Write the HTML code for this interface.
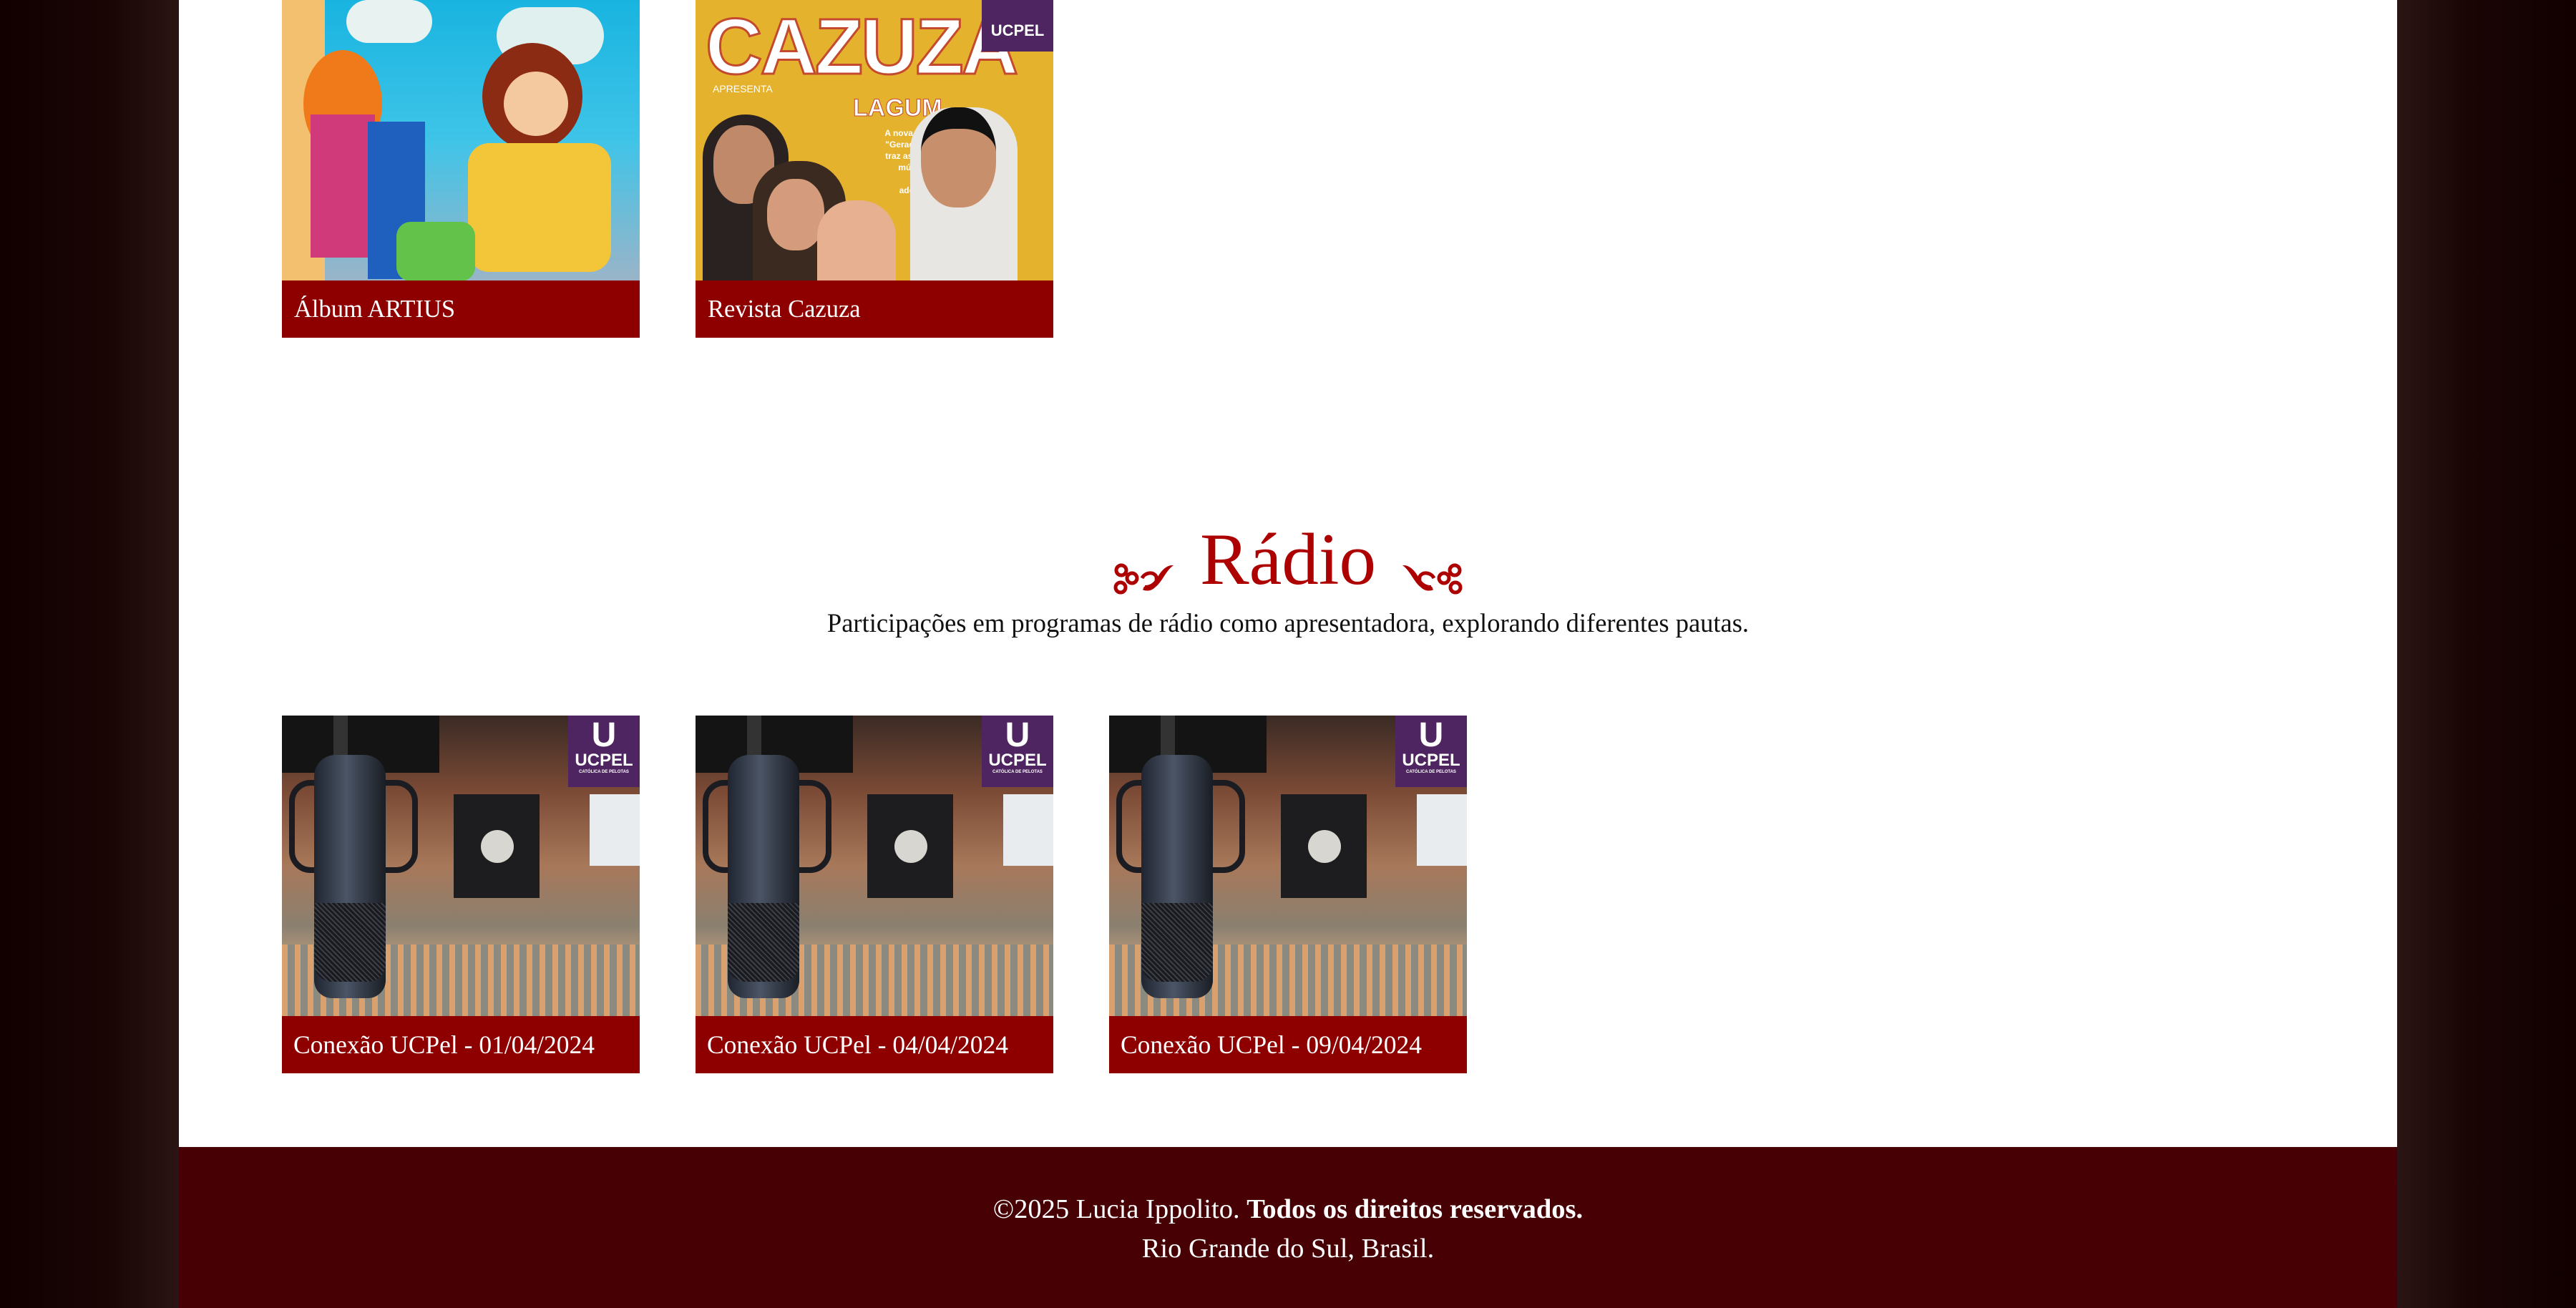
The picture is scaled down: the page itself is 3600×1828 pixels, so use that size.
<!DOCTYPE html>
<html><head><meta charset="utf-8"><style>
*{margin:0;padding:0;box-sizing:border-box}
html,body{width:3600px;height:1828px;overflow:hidden}
body{background:linear-gradient(90deg,#120000 0,#140101 100px,#2a1414 250px,#2a1414 3350px,#1a0505 3450px,#120000 3600px);position:relative;font-family:"Liberation Serif",serif}
#main{position:absolute;left:250px;top:0;width:3100px;height:1603px;background:#fff}
#foot{position:absolute;left:250px;top:1603px;width:3100px;height:225px;background:#470003;color:#fff;text-align:center;font-size:38.5px}
.card{position:absolute;width:500px;overflow:hidden}
.lab{position:absolute;left:0;width:500px;height:80px;background:#8e0000;color:#fff;font-size:34.5px;padding-left:17px;line-height:80px}
.img{position:absolute;left:0;top:0;width:500px;overflow:hidden}
.ucp{position:absolute;right:0;top:0;width:100px;height:100px;background:#4e2560;color:#fff;font-family:"Liberation Sans",sans-serif;font-weight:bold;text-align:center}
</style></head><body>
<div style="position:absolute;left:0;top:0;width:250px;height:1828px;background:linear-gradient(90deg,#110000,#1a0505 60%,#2a1414)"></div>
<div style="position:absolute;left:3350px;top:0;width:250px;height:1828px;background:linear-gradient(90deg,#2a1414,#1a0505 40%,#110000)"></div>
<div id="main"></div>

<!-- Album ARTIUS -->
<div class="card" style="left:394px;top:0;height:472px">
 <div class="img" style="height:393px;background:linear-gradient(180deg,#18b4e0,#3fc4e8 50%,#9ab4c8)">
  <div style="position:absolute;left:0;top:0;width:60px;height:393px;background:#f3c070"></div>
  <div style="position:absolute;left:90px;top:0;width:120px;height:60px;background:#e8f2f0;border-radius:40px"></div>
  <div style="position:absolute;left:300px;top:10px;width:150px;height:80px;background:#dff0ee;border-radius:40px"></div>
  <div style="position:absolute;left:30px;top:70px;width:110px;height:150px;background:#f07a1a;border-radius:50%"></div>
  <div style="position:absolute;left:40px;top:160px;width:90px;height:200px;background:#d13a7a"></div>
  <div style="position:absolute;left:120px;top:170px;width:80px;height:220px;background:#1f5fbd"></div>
  <div style="position:absolute;left:280px;top:60px;width:140px;height:150px;background:#8c2b14;border-radius:50%"></div>
  <div style="position:absolute;left:310px;top:100px;width:90px;height:90px;background:#f5c9a0;border-radius:50%"></div>
  <div style="position:absolute;left:260px;top:200px;width:200px;height:180px;background:#f3c63a;border-radius:30px"></div>
  <div style="position:absolute;left:160px;top:310px;width:110px;height:83px;background:#62c24a;border-radius:20px"></div>
 </div>
 <div class="lab" style="top:392px">Álbum ARTIUS</div>
</div>

<!-- Revista Cazuza -->
<div class="card" style="left:972px;top:0;height:472px">
 <div class="img" style="height:393px;background:#e5b22e">
  <div style="position:absolute;left:14px;top:2px;font-family:'Liberation Sans',sans-serif;font-weight:bold;font-size:110px;color:#fff;-webkit-text-stroke:3px #c34a2e;letter-spacing:-3px">CAZUZA</div>
  <div style="position:absolute;left:24px;top:116px;font-family:'Liberation Sans',sans-serif;font-size:14px;color:#fff">APRESENTA</div>
  <div style="position:absolute;left:220px;top:132px;font-family:'Liberation Sans',sans-serif;font-weight:bold;font-size:34px;color:#fff;-webkit-text-stroke:1px #c34a2e">LAGUM</div>
  <div style="position:absolute;left:250px;top:178px;width:110px;font-family:'Liberation Sans',sans-serif;font-weight:bold;font-size:12px;line-height:16px;color:#fff;text-align:right">A nova banda da "Geração Z" que traz as melhores músicas para playlist da adolescência</div>
  <div style="position:absolute;left:10px;top:160px;width:120px;height:240px;background:#2a2220;border-radius:60px 60px 0 0"></div>
  <div style="position:absolute;left:25px;top:175px;width:85px;height:110px;background:#c08a6a;border-radius:45%"></div>
  <div style="position:absolute;left:80px;top:225px;width:130px;height:180px;background:#3a2a20;border-radius:60px 60px 0 0"></div>
  <div style="position:absolute;left:100px;top:250px;width:80px;height:100px;background:#d49c7c;border-radius:45%"></div>
  <div style="position:absolute;left:170px;top:280px;width:110px;height:120px;background:#e7b091;border-radius:50px 50px 0 0"></div>
  <div style="position:absolute;left:300px;top:150px;width:150px;height:250px;background:#e8e6e2;border-radius:60px 60px 0 0"></div>
  <div style="position:absolute;left:315px;top:150px;width:105px;height:140px;background:#c88f6d;border-radius:45%;border-top:30px solid #111"></div>
  <div class="ucp" style="width:100px;height:72px;top:0"><div style="font-size:22px;padding-top:30px">UCPEL</div></div>
 </div>
 <div class="lab" style="top:392px">Revista Cazuza</div>
</div>

<!-- Rádio title -->
<div style="position:absolute;left:0;top:722px;width:3600px;text-align:center;font-size:103px;color:#ad0000;line-height:120px">Rádio</div>
<svg width="3600" height="900" style="position:absolute;left:0;top:0" viewBox="0 0 3600 900">
 <g fill="none" stroke="#ad0000" stroke-width="5">
  <circle cx="1567" cy="797" r="7"/><circle cx="1566" cy="821" r="7"/><circle cx="1582" cy="808" r="7"/>
  <path d="M1596 808 C1600 800 1612 798 1616 806 C1618 818 1608 826 1598 822"/>
 </g>
 <path d="M1600 822 C1620 830 1625 800 1640 790 C1636 790 1630 790 1622 800 C1614 812 1610 818 1600 818 Z" fill="#ad0000"/>
 <g transform="translate(3600 0) scale(-1 1)">
  <g fill="none" stroke="#ad0000" stroke-width="5">
   <circle cx="1567" cy="797" r="7"/><circle cx="1566" cy="821" r="7"/><circle cx="1582" cy="808" r="7"/>
   <path d="M1596 808 C1600 800 1612 798 1616 806 C1618 818 1608 826 1598 822"/>
  </g>
  <path d="M1600 822 C1620 830 1625 800 1640 790 C1636 790 1630 790 1622 800 C1614 812 1610 818 1600 818 Z" fill="#ad0000"/>
 </g>
</svg>
<div style="position:absolute;left:0;top:849px;width:3600px;text-align:center;font-size:36.5px;color:#111">Participações em programas de rádio como apresentadora, explorando diferentes pautas.</div>

<!-- radio cards -->
<div class="card" style="left:394px;top:1000px;height:500px">
 <div class="img" style="height:420px;background:linear-gradient(180deg,#3a2a24 0,#7a4a35 25%,#a8785a 50%,#8a8070 70%,#c9a27e 85%,#9c8a78)">
  <div style="position:absolute;left:0;top:0;width:220px;height:80px;background:#141414"></div>
  <div style="position:absolute;left:240px;top:110px;width:120px;height:145px;background:#1d1d1f"></div>
  <div style="position:absolute;left:278px;top:160px;width:46px;height:46px;background:#d8d6d0;border-radius:50%"></div>
  <div style="position:absolute;left:430px;top:110px;width:70px;height:100px;background:#e8ecef"></div>
  <div style="position:absolute;left:0;top:320px;width:500px;height:100px;background:repeating-linear-gradient(90deg,#d9a070 0 8px,#8a8a80 8px 18px)"></div>
  <div style="position:absolute;left:72px;top:0;width:20px;height:60px;background:#333"></div>
  <div style="position:absolute;left:10px;top:90px;width:180px;height:130px;border:8px solid #1a1c22;border-radius:30px"></div>
  <div style="position:absolute;left:45px;top:55px;width:100px;height:340px;background:linear-gradient(90deg,#202530,#4a5566 45%,#1a1d24);border-radius:30px 30px 25px 25px"></div>
  <div style="position:absolute;left:45px;top:262px;width:100px;height:110px;background:repeating-linear-gradient(45deg,#1a1a1e 0 3px,#3a3f48 3px 5px);border-radius:0 0 25px 25px"></div>
  <div class="ucp"><div style="font-size:48px;line-height:44px;padding-top:6px">U</div><div style="font-size:24px;line-height:26px">UCPEL</div><div style="font-size:6px">CATÓLICA DE PELOTAS</div></div>
 </div>
 <div class="lab" style="top:420px;font-size:35.5px;padding-left:16px">Conexão UCPel - 01/04/2024</div>
</div>
<div class="card" style="left:972px;top:1000px;height:500px">
 <div class="img" style="height:420px;background:linear-gradient(180deg,#3a2a24 0,#7a4a35 25%,#a8785a 50%,#8a8070 70%,#c9a27e 85%,#9c8a78)">
  <div style="position:absolute;left:0;top:0;width:220px;height:80px;background:#141414"></div>
  <div style="position:absolute;left:240px;top:110px;width:120px;height:145px;background:#1d1d1f"></div>
  <div style="position:absolute;left:278px;top:160px;width:46px;height:46px;background:#d8d6d0;border-radius:50%"></div>
  <div style="position:absolute;left:430px;top:110px;width:70px;height:100px;background:#e8ecef"></div>
  <div style="position:absolute;left:0;top:320px;width:500px;height:100px;background:repeating-linear-gradient(90deg,#d9a070 0 8px,#8a8a80 8px 18px)"></div>
  <div style="position:absolute;left:72px;top:0;width:20px;height:60px;background:#333"></div>
  <div style="position:absolute;left:10px;top:90px;width:180px;height:130px;border:8px solid #1a1c22;border-radius:30px"></div>
  <div style="position:absolute;left:45px;top:55px;width:100px;height:340px;background:linear-gradient(90deg,#202530,#4a5566 45%,#1a1d24);border-radius:30px 30px 25px 25px"></div>
  <div style="position:absolute;left:45px;top:262px;width:100px;height:110px;background:repeating-linear-gradient(45deg,#1a1a1e 0 3px,#3a3f48 3px 5px);border-radius:0 0 25px 25px"></div>
  <div class="ucp"><div style="font-size:48px;line-height:44px;padding-top:6px">U</div><div style="font-size:24px;line-height:26px">UCPEL</div><div style="font-size:6px">CATÓLICA DE PELOTAS</div></div>
 </div>
 <div class="lab" style="top:420px;font-size:35.5px;padding-left:16px">Conexão UCPel - 04/04/2024</div>
</div>
<div class="card" style="left:1550px;top:1000px;height:500px">
 <div class="img" style="height:420px;background:linear-gradient(180deg,#3a2a24 0,#7a4a35 25%,#a8785a 50%,#8a8070 70%,#c9a27e 85%,#9c8a78)">
  <div style="position:absolute;left:0;top:0;width:220px;height:80px;background:#141414"></div>
  <div style="position:absolute;left:240px;top:110px;width:120px;height:145px;background:#1d1d1f"></div>
  <div style="position:absolute;left:278px;top:160px;width:46px;height:46px;background:#d8d6d0;border-radius:50%"></div>
  <div style="position:absolute;left:430px;top:110px;width:70px;height:100px;background:#e8ecef"></div>
  <div style="position:absolute;left:0;top:320px;width:500px;height:100px;background:repeating-linear-gradient(90deg,#d9a070 0 8px,#8a8a80 8px 18px)"></div>
  <div style="position:absolute;left:72px;top:0;width:20px;height:60px;background:#333"></div>
  <div style="position:absolute;left:10px;top:90px;width:180px;height:130px;border:8px solid #1a1c22;border-radius:30px"></div>
  <div style="position:absolute;left:45px;top:55px;width:100px;height:340px;background:linear-gradient(90deg,#202530,#4a5566 45%,#1a1d24);border-radius:30px 30px 25px 25px"></div>
  <div style="position:absolute;left:45px;top:262px;width:100px;height:110px;background:repeating-linear-gradient(45deg,#1a1a1e 0 3px,#3a3f48 3px 5px);border-radius:0 0 25px 25px"></div>
  <div class="ucp"><div style="font-size:48px;line-height:44px;padding-top:6px">U</div><div style="font-size:24px;line-height:26px">UCPEL</div><div style="font-size:6px">CATÓLICA DE PELOTAS</div></div>
 </div>
 <div class="lab" style="top:420px;font-size:35.5px;padding-left:16px">Conexão UCPel - 09/04/2024</div>
</div>

<div id="foot">
 <div style="position:absolute;left:0;top:62px;width:3100px;line-height:50px">©2025 Lucia Ippolito. <b>Todos os direitos reservados.</b></div>
 <div style="position:absolute;left:0;top:117px;width:3100px;line-height:50px">Rio Grande do Sul, Brasil.</div>
</div>
</body></html>
